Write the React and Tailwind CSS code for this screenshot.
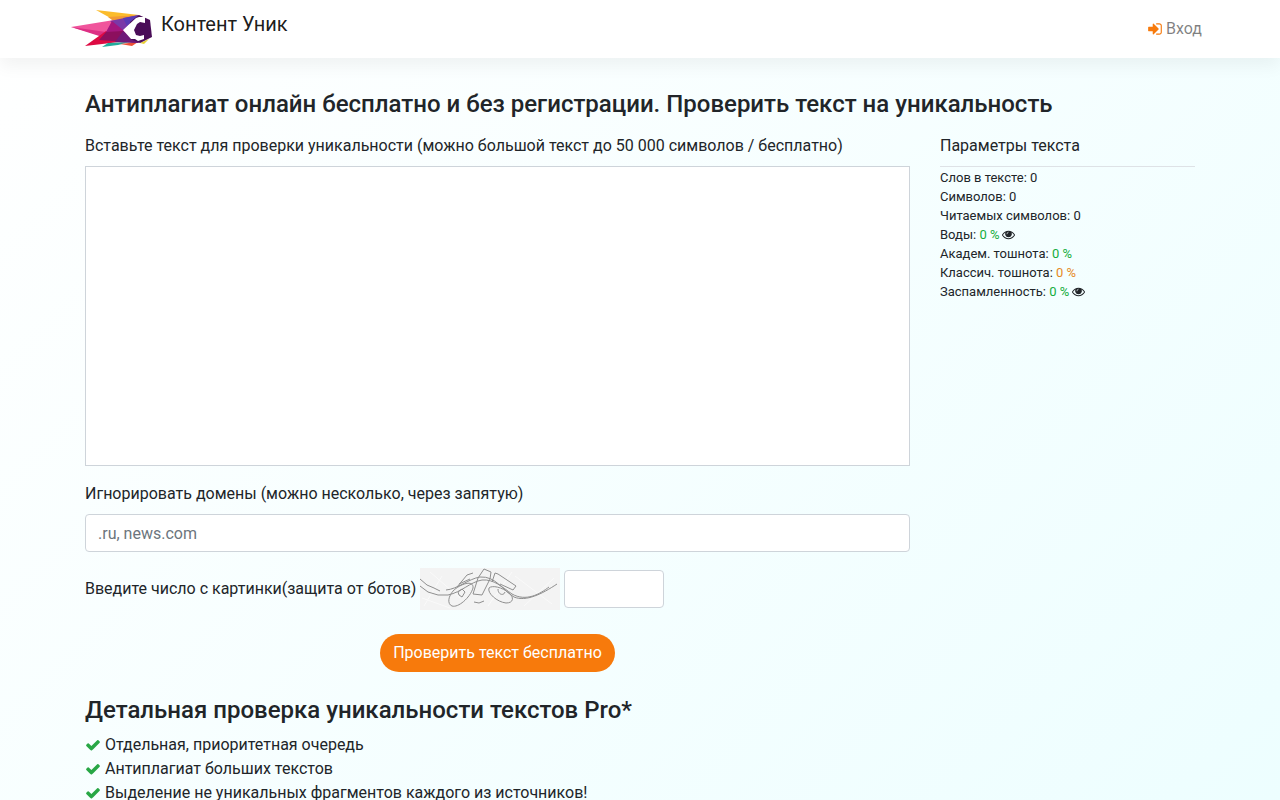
import { useState } from "react";

const listItems = [
  "Отдельная, приоритетная очередь",
  "Антиплагиат больших текстов",
  "Выделение не уникальных фрагментов каждого из источников!",
];

const SignInIcon = () => (
  <svg viewBox="0 0 1792 1792" className="h-4 w-4 fill-[#f77a0c]" aria-hidden="true">
    <path d="M1312 896q0 26-19 45l-544 544q-19 19-45 19t-45-19-19-45v-288h-448q-26 0-45-19t-19-45v-384q0-26 19-45t45-19h448v-288q0-26 19-45t45-19 45 19l544 544q19 19 19 45zm352-352v704q0 119-84.5 203.5t-203.5 84.5h-320q-13 0-22.5-9.5t-9.5-22.5q0-4-1-20t-.5-26.5 3-23.5 10-19.5 20.5-6.5h320q66 0 113-47t47-113v-704q0-66-47-113t-113-47h-312l-11.5-1-11.5-3-8-5.5-7-9-2-13.5q0-4-1-20t-.5-26.5 3-23.5 10-19.5 20.5-6.5h320q119 0 203.5 84.5t84.5 203.5z" />
  </svg>
);

const EyeIcon = () => (
  <svg viewBox="0 0 1792 1792" className="h-[13px] w-[13px] fill-[#212529]" aria-hidden="true">
    <path d="M1664 960q-152-236-381-353 61 104 61 225 0 185-131.5 316.5t-316.5 131.5-316.5-131.5-131.5-316.5q0-121 61-225-229 117-381 353 133 205 333.5 326.5t434.5 121.5 434.5-121.5 333.5-326.5zm-720-384q0-20-14-34t-34-14q-125 0-214.5 89.5t-89.5 214.5q0 20 14 34t34 14 34-14 14-34q0-86 61-147t147-61q20 0 34-14t14-34zm848 384q0 34-20 69-140 230-376.5 368.5t-499.5 138.5-499.5-139-376.5-368q-20-35-20-69t20-69q140-229 376.5-368t499.5-139 499.5 139 376.5 368q20 35 20 69z" />
    <circle cx="896" cy="832" r="400" />
    <path d="M690 850q-20-250 210-270" fill="none" stroke="#f7ffff" strokeWidth="90" />
  </svg>
);

const CheckIcon = () => (
  <svg viewBox="0 0 1792 1792" className="h-4 w-4 shrink-0 fill-[#28a745]" aria-hidden="true">
    <path d="M1671 566q0 40-28 68l-724 724-136 136q-28 28-68 28t-68-28l-136-136-362-362q-28-28-28-68t28-68l136-136q28-28 68-28t68 28l294 295 656-657q28-28 68-28t68 28l136 136q28 28 28 68z" />
  </svg>
);

const Logo = () => (
  <svg viewBox="0 0 83 40" className="h-10 w-[83px]" aria-hidden="true">
    <path d="M26 1 L69 6 L58 16 L44 11z" fill="#fbbc2c" />
    <path d="M38 8 L69 6 L60 16 L46 14z" fill="#f29a35" />
    <path d="M1 18 L44 11 L54 22 L50 32z" fill="#f0559c" />
    <path d="M1 18 L36 23 L56 34 L48 33z" fill="#dd2f84" />
    <path d="M15 37 L36 22 L58 32z" fill="#dd0a42" />
    <path d="M32 38 L38 34 L60 33 L48 36z" fill="#22ab9b" />
    <path d="M50 35 L68 33 L62 37z" fill="#ee4f36" />
    <path d="M70 34 L79 30 L74 35z" fill="#e8cf33" />
    <path d="M40 12 L69 6 L53 22z" fill="#7a39a8" />
    <path d="M53 9 L69 6 L57 17z" fill="#5a3bb5" />
    <path d="M36 23 L42 12 L53 21 L69 34 L46 32z" fill="#a3177f" />
    <path d="M36 23 L29 31 L69 34 L53 22z" fill="#8c0f5e" />
    <path d="M45 33 L53 22 L69 34z" fill="#6f1a78" />
    <path d="M69 6 L80 11 L82 28 L70 34 L60 30 L60 13z" fill="#4a0d58" />
    <path d="M53 21 L66 9 L69 8 L75 8 L75 14 L70 13 L67 15 L64 21 L66 26 L70 27 L74 26 L74 30 L68 32 L65 30 L61 30z" fill="#fff" />
  </svg>
);

const Captcha = () => (
  <svg viewBox="0 0 140 42" className="h-[42px] w-[140px] shrink-0" role="img" aria-label="Число с картинки">
    <rect width="140" height="42" fill="#f3f3f3" />
    <g fill="none" stroke="#fafafa" strokeWidth="1">
      <path d="M4 38 L22 8 M10 4 L40 30 M68 38 L92 4 M95 8 L132 36 M104 38 L134 10 M2 30 L30 40" />
    </g>
    <g fill="none" stroke="#8f8f8f" strokeWidth="1">
      <path d="M0 11 L7 17 L14 20 L20 23" />
      <path d="M26 22 C38 21 48 11 60 9 C76 8 82 22 94 29 C106 34 122 26 137 16" />
      <path d="M0 18 L8 24 L18 27 L28 27 C42 24 50 14 62 12 C74 11 82 19 92 26 C106 34 120 26 129 19" />
      <path d="M34 22 C28 28 27 36 32 38 C38 40 50 30 53 20 C54 12 42 15 34 22z" />
      <path d="M38 24 L42 21 L45 24 L42 29 L39 27z M37 19 L47 7 L53 5 M39 16 L50 11" />
      <path d="M53 26 L58 10 L64 1 L71 4 L70 11 L62 27z" />
      <path d="M72 14 L75 5 L78 6 L96 18 L93 22 L80 16" />
      <path d="M69 20 C67 25 77 34 86 35 C94 35 94 29 89 25 C82 19 72 17 69 20z M78 21 C78 27 84 28 85 24" />
      <path d="M54 34 L59 35 L64 33" />
    </g>
  </svg>
);

function Stat({ label, value, color, eye }) {
  return (
    <li className="flex items-center gap-[3px]">
      <span>
        {label}: <span className={color}>{value}</span>
      </span>
      {eye && (
        <button type="button" aria-label="Показать">
          <EyeIcon />
        </button>
      )}
    </li>
  );
}

export default function App() {
  const [text, setText] = useState("");
  const [domains, setDomains] = useState("");
  const [code, setCode] = useState("");

  const words = text.split(/\s+/).filter(Boolean).length;
  const readable = text.replace(/\s/g, "").length;

  return (
    <div className="min-h-screen bg-linear-135 from-white to-[#edfeff] font-[Roboto,sans-serif] text-base text-[#212529]">
      <header className="bg-white shadow-[0_8px_16px_rgba(0,0,0,0.05)]">
        <nav className="mx-auto flex h-[58px] max-w-[1140px] items-center justify-between pr-2">
          <a href="#" className="flex items-start gap-2 text-xl leading-[30px] text-black/90">
            <Logo />
            <span>Контент Уник</span>
          </a>
          <a href="#login" className="flex items-center gap-[3px] text-black/50">
            <SignInIcon />
            Вход
          </a>
        </nav>
      </header>

      <main className="mx-auto max-w-[1140px] px-[15px] pt-8">
        <h1 className="mb-[15px] text-2xl leading-[29px] font-medium">
          Антиплагиат онлайн бесплатно и без регистрации. Проверить текст на уникальность
        </h1>

        <div className="grid grid-cols-1 gap-[30px] lg:grid-cols-[825fr_255fr]">
          <form onSubmit={(e) => e.preventDefault()}>
            <label htmlFor="text" className="mb-2 block">
              Вставьте текст для проверки уникальности (можно большой текст до 50 000 символов / бесплатно)
            </label>
            <textarea
              id="text"
              value={text}
              onChange={(e) => setText(e.target.value)}
              className="mb-4 block h-[300px] w-full resize-none border border-[#ced4da] bg-white px-3 py-2 outline-none"
            />

            <label htmlFor="domains" className="mb-2 block">
              Игнорировать домены (можно несколько, через запятую)
            </label>
            <input
              id="domains"
              type="text"
              value={domains}
              onChange={(e) => setDomains(e.target.value)}
              placeholder=".ru, news.com"
              className="mb-4 block h-[38px] w-full rounded border border-[#ced4da] bg-white px-3 outline-none placeholder:text-[#6c757d]"
            />

            <div className="mb-6 flex items-center gap-1">
              <label htmlFor="code">Введите число с картинки(защита от ботов)</label>
              <Captcha />
              <input
                id="code"
                type="text"
                value={code}
                onChange={(e) => setCode(e.target.value)}
                className="h-[38px] w-[100px] rounded border border-[#ced4da] bg-white px-3 outline-none"
              />
            </div>

            <div className="text-center">
              <button type="submit" className="h-[38px] rounded-full bg-[#f77a0c] px-[13px] text-white">
                Проверить текст бесплатно
              </button>
            </div>
          </form>

          <aside>
            <h2 className="border-b border-[#dee2e6] pb-2">Параметры текста</h2>
            <ul className="pt-px text-[13px] leading-[19px]">
              <Stat label="Слов в тексте" value={words} />
              <Stat label="Символов" value={text.length} />
              <Stat label="Читаемых символов" value={readable} />
              <Stat label="Воды" value="0 %" color="text-[#14ad3c]" eye />
              <Stat label="Академ. тошнота" value="0 %" color="text-[#14ad3c]" />
              <Stat label="Классич. тошнота" value="0 %" color="text-[#e68a1e]" />
              <Stat label="Заспамленность" value="0 %" color="text-[#14ad3c]" eye />
            </ul>
          </aside>
        </div>

        <section className="pt-6">
          <h2 className="mb-2 text-2xl leading-[29px] font-medium">Детальная проверка уникальности текстов Pro*</h2>
          <ul>
            {listItems.map((item) => (
              <li key={item} className="flex items-center gap-1">
                <CheckIcon />
                {item}
              </li>
            ))}
          </ul>
        </section>
      </main>
    </div>
  );
}
